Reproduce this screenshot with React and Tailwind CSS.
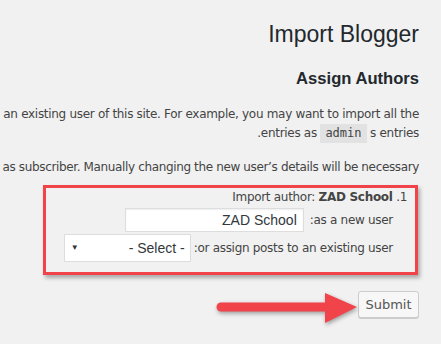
export default function App() {
  const body = { fontFamily: '"DejaVu Sans", Verdana, sans-serif' };
  const arial = { fontFamily: '"Liberation Sans", Arial, sans-serif' };

  return (
    <div className="min-h-screen w-full overflow-hidden bg-[#f1f1f1] text-[#444]">
      <div className="pr-[22px] pt-[20px]">
        <h1 className="text-right text-[23px] leading-[29px] font-normal text-[#23282d]" style={arial}>
          Import Blogger
        </h1>
        <h2 className="mt-[20px] text-right text-[16.6px] leading-[20px] font-bold text-[#23282d]" style={arial}>
          Assign Authors
        </h2>

        <div className="mt-[16px] text-[12px] leading-[19px] tracking-[-0.3px]" style={body}>
          <p className="flex justify-end whitespace-nowrap">
            an existing user of this site. For example, you may want to import all the
          </p>
          <p className="flex justify-end whitespace-nowrap">
            <span>.entries as&nbsp;</span>
            <code
              className="bg-[#e2e2e2] px-[5px] text-[12px] tracking-normal text-[#444]"
              style={{ fontFamily: '"DejaVu Sans Mono", monospace' }}
            >
              admin
            </code>
            <span>&nbsp;s entries</span>
          </p>
          <p className="mt-[15px] flex justify-end whitespace-nowrap tracking-[-0.36px]">
            as subscriber. Manually changing the new user’s details will be necessary
          </p>
        </div>

        <div
          className="mt-[8px] ml-[43px] mr-[1px] h-[90px] border-[3px] border-[#f1434a] pr-[8px] tracking-[-0.3px] shadow-[2px_3px_4px_rgba(0,0,0,0.3)]"
          style={body}
        >
          <p className="text-right text-[12px] leading-[19px]">
            Import author: <strong className="font-bold">ZAD School</strong> .1
          </p>
          <div className="mt-[1px] flex flex-col items-end gap-[2px] pr-[14px] text-[12px]">
            <div className="flex items-center gap-[6px]">
              <div
                className="flex h-[24px] w-[179px] items-center justify-end border border-[#ddd] bg-white pr-[6px] text-[14px] tracking-normal text-[#32373c] shadow-[inset_0_1px_2px_rgba(0,0,0,0.07)]"
                style={arial}
              >
                ZAD School
              </div>
              <span>:as a new user</span>
            </div>
            <div className="flex items-center gap-[3px]">
              <div
                className="flex h-[28px] w-[127px] items-center justify-between border border-[#ddd] bg-white pl-[6px] pr-[5px] text-[14px] tracking-normal text-[#32373c]"
                style={arial}
              >
                <span className="text-[8px] leading-none">▼</span>
                <span>- Select -</span>
              </div>
              <span>:or assign posts to an existing user</span>
            </div>
          </div>
        </div>

        <div className="mt-[16px] flex items-start justify-end">
          <svg
            width="146"
            height="40"
            viewBox="0 0 146 40"
            className="-mt-[3px] drop-shadow-[1px_2px_2px_rgba(0,0,0,0.35)]"
          >
            <line x1="9" y1="19" x2="118" y2="19" stroke="#f1434a" strokeWidth="9" strokeLinecap="round" />
            <polygon points="113,5 145,19 113,35" fill="#f1434a" />
          </svg>
          <button
            className="h-[27px] w-[61px] rounded-[3px] border border-[#ccc] bg-[#f7f7f7] text-[13px] text-[#555] shadow-[0_1px_0_#ccc]"
            style={body}
          >
            Submit
          </button>
        </div>
      </div>
    </div>
  );
}
